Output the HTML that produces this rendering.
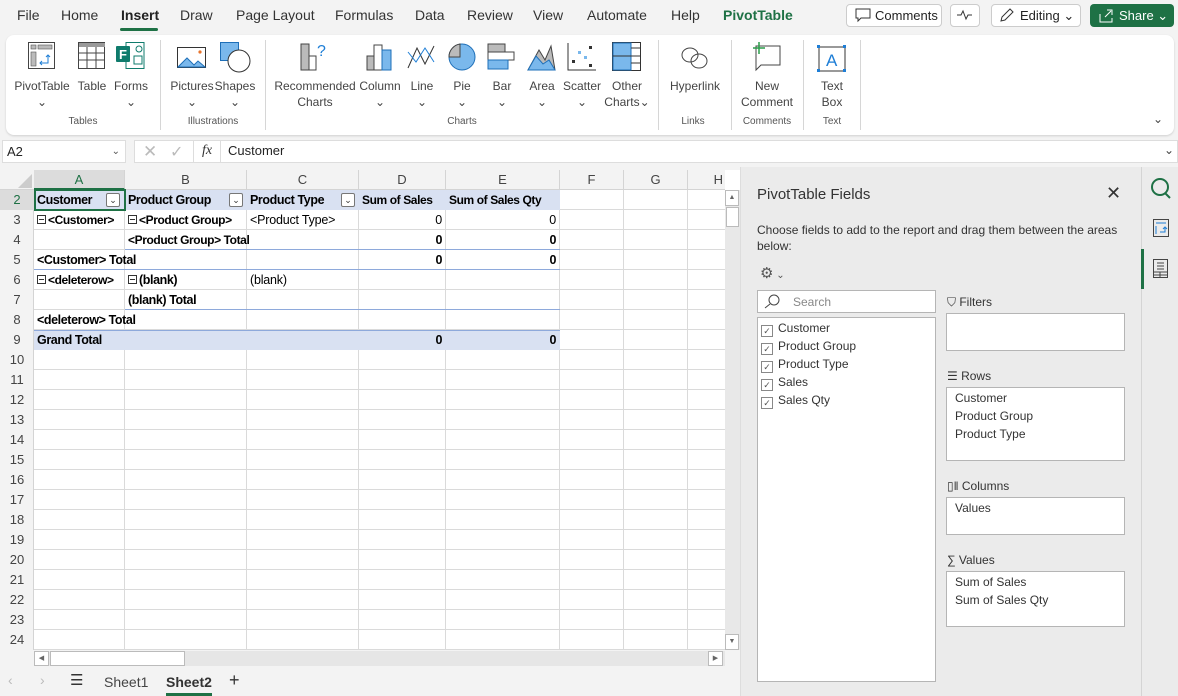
<!DOCTYPE html>
<html><head><meta charset="utf-8"><style>
*{box-sizing:border-box;margin:0;padding:0}
body{width:1178px;height:696px;overflow:hidden;background:#f3f3f3;font-family:"Liberation Sans",sans-serif;color:#242424;position:relative}
.a{position:absolute}
.tab{position:absolute;top:7px;font-size:14px;color:#333}
.rl{position:absolute;font-size:12px;color:#444;text-align:center;line-height:16px;transform:translateX(-50%);white-space:nowrap}
.gl{position:absolute;top:116px;font-size:10px;color:#555;transform:translateX(-50%)}
.sep{position:absolute;top:40px;width:1px;height:90px;background:#d6d6d6}
.ic{position:absolute;top:42px}
.ch{position:absolute;top:170px;height:20px;font-size:13px;color:#444;text-align:center;line-height:20px;border-right:1px solid #d4d4d4}
.rh{position:absolute;left:0;width:34px;height:20px;font-size:13px;color:#444;text-align:center;line-height:20px}
.c{position:absolute;height:20px;line-height:20px;font-size:12.5px;color:#000;white-space:nowrap;padding-left:3px;letter-spacing:-0.2px}
.b{font-weight:bold;letter-spacing:-0.4px}
.r{text-align:right;padding-right:4px}
.m{display:inline-block;width:9px;height:9px;border:1px solid #333;position:relative;margin-right:2px;vertical-align:0}
.m:after{content:"";position:absolute;left:1px;right:1px;top:3px;height:1px;background:#333}
.dd{position:absolute;width:14px;height:14px;border:1px solid #777;background:#fff;border-radius:2px;font-size:9px;line-height:12px;text-align:center;color:#333}
.pt{font-size:12px;color:#333}
.box{position:absolute;background:#fff;border:1px solid #b5b5b5}
.cb{display:inline-block;width:12px;height:12px;border:1px solid #888;vertical-align:-2px;margin-right:5px;font-size:9px;line-height:10px;text-align:center;color:#555}
</style></head><body>
<div class="tab" style="left:17px">File</div>
<div class="tab" style="left:61px">Home</div>
<div class="tab" style="left:121px;font-weight:bold;color:#222">Insert</div>
<div class="a" style="left:120px;top:28px;width:38px;height:3px;background:#1e7145;border-radius:2px"></div>
<div class="tab" style="left:180px">Draw</div>
<div class="tab" style="left:236px">Page Layout</div>
<div class="tab" style="left:335px">Formulas</div>
<div class="tab" style="left:415px">Data</div>
<div class="tab" style="left:467px">Review</div>
<div class="tab" style="left:533px">View</div>
<div class="tab" style="left:587px">Automate</div>
<div class="tab" style="left:671px">Help</div>
<div class="tab" style="left:723px;color:#1e7145;font-weight:bold">PivotTable</div>
<div class="a" style="left:846px;top:4px;width:96px;height:23px;border:1px solid #ccc;border-radius:4px;background:#fff;font-size:13px;line-height:21px;padding-left:28px">Comments</div>
<svg class="a" style="left:855px;top:8px" width="16" height="15"><path d="M1 1h14v9H6l-3 3v-3H1z" fill="none" stroke="#333"/></svg>
<div class="a" style="left:950px;top:4px;width:30px;height:23px;border:1px solid #ccc;border-radius:4px;background:#fff"></div>
<svg class="a" style="left:956px;top:9px" width="18" height="12"><path d="M1 6h4l2-4 3 8 2-4h4" fill="none" stroke="#333"/></svg>
<div class="a" style="left:991px;top:4px;width:90px;height:23px;border:1px solid #ccc;border-radius:4px;background:#fff;font-size:13px;line-height:21px;padding-left:28px">Editing ⌄</div>
<svg class="a" style="left:999px;top:7px" width="16" height="16"><path d="M2 14l1-4 8-8 3 3-8 8z" fill="none" stroke="#333"/></svg>
<div class="a" style="left:1090px;top:4px;width:84px;height:23px;border-radius:4px;background:#1e7145;color:#fff;font-size:13px;line-height:23px;padding-left:29px">Share ⌄</div>
<svg class="a" style="left:1098px;top:8px" width="16" height="15"><path d="M2 6v8h12v-4M7 9l6-6M9 2h5v5" fill="none" stroke="#fff"/></svg>
<div class="a" style="left:6px;top:35px;width:1168px;height:100px;background:#fff;border-radius:8px;box-shadow:0 1px 2px rgba(0,0,0,.15)"></div>
<svg class="ic" style="left:28px" width="28" height="28"><rect x=".5" y=".5" width="26" height="26" fill="#fff" stroke="#444"/><rect x="3" y="3" width="5" height="4" fill="#bbb" stroke="#555" stroke-width=".6"/><rect x="10" y="3" width="14" height="4" fill="#bbb" stroke="#555" stroke-width=".6"/><rect x="3" y="10" width="5" height="14" fill="#bbb" stroke="#555" stroke-width=".6"/><path d="M12 21h8v-8M18 15l2-2 2 2M14 19l-2 2 2 2" fill="none" stroke="#1e7ed6"/></svg>
<svg class="ic" style="left:78px" width="28" height="28"><rect x=".5" y=".5" width="26" height="26" fill="#fff" stroke="#444"/><rect x="1" y="1" width="26" height="4" fill="#999"/><path d="M1 11h26M1 18h26M9 5v22M18 5v22" stroke="#444"/></svg>
<svg class="ic" style="left:116px" width="30" height="28"><rect x="10" y=".5" width="18" height="26" fill="#fff" stroke="#0f7b6c"/><circle cx="23" cy="7" r="3" fill="none" stroke="#0f7b6c"/><rect x="18" y="14" width="8" height="8" fill="none" stroke="#0f7b6c"/><rect x="0" y="4" width="14" height="16" rx="1" fill="#0f7b6c"/><text x="3" y="17" fill="#fff" font-size="13" font-weight="bold" font-family="Liberation Sans">F</text></svg>
<div class="sep" style="left:160px"></div>
<svg class="ic" style="left:177px;top:47px" width="30" height="22"><rect x=".5" y=".5" width="28" height="20" fill="#fff" stroke="#333"/><path d="M1 20l9-9 7 7 4-4 7 6v0H1z" fill="#7ab8ec" stroke="#1e6fb8"/><circle cx="23" cy="5" r="1.6" fill="#e8742c"/></svg>
<svg class="ic" style="left:220px" width="32" height="32"><rect x=".5" y=".5" width="18" height="18" fill="#7ab8ec" stroke="#1e6fb8"/><circle cx="19" cy="19" r="11" fill="#fff" stroke="#333"/></svg>
<div class="sep" style="left:265px"></div>
<svg class="ic" style="left:300px" width="30" height="30"><rect x="1" y="2" width="8" height="26" fill="#bbb" stroke="#444"/><rect x="9" y="14" width="7" height="14" fill="#fff" stroke="#444"/><text x="17" y="14" font-size="16" fill="#1e7ed6" font-family="Liberation Sans">?</text></svg>
<svg class="ic" style="left:366px" width="28" height="30"><rect x="1" y="14" width="8" height="14" fill="#bbb" stroke="#444"/><rect x="8" y="3" width="8" height="25" fill="#fff" stroke="#444"/><rect x="16" y="8" width="9" height="20" fill="#7ab8ec" stroke="#1e6fb8"/></svg>
<svg class="ic" style="left:407px" width="30" height="30"><path d="M1 26L10 6l8 16 9-18" fill="none" stroke="#333"/><path d="M1 10l8 10 9-14 9 14" fill="none" stroke="#1e7ed6"/></svg>
<svg class="ic" style="left:447px" width="30" height="30"><circle cx="15" cy="15" r="13" fill="#7ab8ec" stroke="#1e6fb8"/><path d="M13 2a13 13 0 0 0-11 13h11z" fill="#bbb" stroke="#444"/></svg>
<svg class="ic" style="left:487px" width="30" height="30"><rect x="1" y="2" width="17" height="8" fill="#bbb" stroke="#444"/><rect x="1" y="10" width="26" height="8" fill="#fff" stroke="#444"/><rect x="1" y="18" width="20" height="9" fill="#7ab8ec" stroke="#1e6fb8"/></svg>
<svg class="ic" style="left:527px" width="30" height="30"><path d="M1 28L12 8l6 10 6-14 4 24z" fill="#bbb" stroke="#444"/><path d="M1 28l8-14 7 8 6-4 6 10z" fill="#7ab8ec" stroke="#1e6fb8"/></svg>
<svg class="ic" style="left:567px" width="30" height="30"><path d="M1 1v27h28" fill="none" stroke="#333"/><rect x="5" y="18" width="3" height="3" fill="#333"/><rect x="11" y="9" width="3" height="3" fill="#7ab8ec"/><rect x="17" y="14" width="3" height="3" fill="#7ab8ec"/><rect x="22" y="4" width="3" height="3" fill="#333"/><rect x="22" y="22" width="3" height="3" fill="#333"/></svg>
<svg class="ic" style="left:612px" width="30" height="30"><rect x=".5" y=".5" width="28" height="28" fill="#fff" stroke="#333"/><rect x="1" y="1" width="18" height="27" fill="#7ab8ec" stroke="#1e6fb8"/><path d="M1 14h18M19 6h10M19 14h10M19 21h10" stroke="#333"/></svg>
<div class="sep" style="left:658px"></div>
<svg class="ic" style="left:680px;top:46px" width="30" height="24"><ellipse cx="10" cy="9" rx="8" ry="7" fill="none" stroke="#444"/><ellipse cx="19" cy="15" rx="8" ry="7" fill="none" stroke="#444"/></svg>
<div class="sep" style="left:731px"></div>
<svg class="ic" style="left:751px" width="30" height="30"><path d="M5 4h24v19H10l-5 5z" fill="#fff" stroke="#444"/><path d="M8 0v12M2 6h12" stroke="#2a9d4a" stroke-width="1.5"/></svg>
<div class="sep" style="left:803px"></div>
<svg class="ic" style="left:817px;top:45px" width="30" height="28"><rect x="2" y="2" width="26" height="24" fill="#fff" stroke="#333"/><rect x="0" y="0" width="3" height="3" fill="#1e7ed6"/><rect x="26" y="0" width="3" height="3" fill="#1e7ed6"/><rect x="0" y="24" width="3" height="3" fill="#1e7ed6"/><rect x="26" y="24" width="3" height="3" fill="#1e7ed6"/><text x="9" y="21" font-size="17" fill="#1e7ed6" font-family="Liberation Sans">A</text></svg>
<div class="sep" style="left:860px"></div>
<div class="rl" style="left:42px;top:78px">PivotTable<br>⌄</div>
<div class="rl" style="left:92px;top:78px">Table</div>
<div class="rl" style="left:131px;top:78px">Forms<br>⌄</div>
<div class="rl" style="left:192px;top:78px">Pictures<br>⌄</div>
<div class="rl" style="left:235px;top:78px">Shapes<br>⌄</div>
<div class="rl" style="left:315px;top:78px">Recommended<br>Charts</div>
<div class="rl" style="left:380px;top:78px">Column<br>⌄</div>
<div class="rl" style="left:422px;top:78px">Line<br>⌄</div>
<div class="rl" style="left:462px;top:78px">Pie<br>⌄</div>
<div class="rl" style="left:502px;top:78px">Bar<br>⌄</div>
<div class="rl" style="left:542px;top:78px">Area<br>⌄</div>
<div class="rl" style="left:582px;top:78px">Scatter<br>⌄</div>
<div class="rl" style="left:627px;top:78px">Other<br>Charts⌄</div>
<div class="rl" style="left:695px;top:78px">Hyperlink</div>
<div class="rl" style="left:767px;top:78px">New<br>Comment</div>
<div class="rl" style="left:832px;top:78px">Text<br>Box</div>
<div class="gl" style="left:83px">Tables</div>
<div class="gl" style="left:213px">Illustrations</div>
<div class="gl" style="left:462px">Charts</div>
<div class="gl" style="left:693px">Links</div>
<div class="gl" style="left:767px">Comments</div>
<div class="gl" style="left:832px">Text</div>
<div class="a" style="left:1153px;top:112px;font-size:12px;color:#444">⌄</div>
<div class="a" style="left:2px;top:140px;width:124px;height:23px;background:#fff;border:1px solid #ddd;font-size:13px;line-height:21px;padding-left:4px">A2<span style="position:absolute;right:5px;font-size:10px;color:#555">⌄</span></div>
<div class="a" style="left:134px;top:140px;width:1044px;height:23px;background:#fff;border:1px solid #ddd"></div>
<div class="a" style="left:143px;top:142px;font-size:17px;color:#bbb">✕</div>
<div class="a" style="left:170px;top:142px;font-size:16px;color:#bbb">✓</div>
<div class="a" style="left:202px;top:143px;font-size:14px;font-style:italic;font-family:'Liberation Serif',serif;color:#333">fx</div>
<div class="a" style="left:193px;top:140px;width:1px;height:23px;background:#ddd"></div>
<div class="a" style="left:220px;top:140px;width:1px;height:23px;background:#ddd"></div>
<div class="a" style="left:228px;top:143px;font-size:13px">Customer</div>
<div class="a" style="left:1164px;top:143px;font-size:12px;color:#444">⌄</div>
<div class="a" style="left:0;top:170px;width:740px;height:480px;background:#fff"></div>
<div class="a" style="left:0;top:170px;width:725px;height:20px;background:#f3f3f3;border-bottom:1px solid #d4d4d4"></div>
<div class="a" style="left:0;top:190px;width:34px;height:460px;background:#f3f3f3;border-right:1px solid #d4d4d4"></div>
<svg class="a" style="left:18px;top:174px" width="14" height="14"><path d="M14 0v14H0z" fill="#ccc"/></svg>
<div class="a" style="left:34px;top:190px;width:691px;height:460px;background:repeating-linear-gradient(to bottom,transparent 0 19px,#dadada 19px 20px)"></div>
<div class="a" style="left:124px;top:190px;width:1px;height:460px;background:#dadada"></div>
<div class="a" style="left:246px;top:190px;width:1px;height:460px;background:#dadada"></div>
<div class="a" style="left:358px;top:190px;width:1px;height:460px;background:#dadada"></div>
<div class="a" style="left:445px;top:190px;width:1px;height:460px;background:#dadada"></div>
<div class="a" style="left:559px;top:190px;width:1px;height:460px;background:#dadada"></div>
<div class="a" style="left:623px;top:190px;width:1px;height:460px;background:#dadada"></div>
<div class="a" style="left:687px;top:190px;width:1px;height:460px;background:#dadada"></div>
<div class="ch" style="left:34px;width:91px;background:#dcdcdc;color:#1e7145;border-bottom:2px solid #1e7145">A</div>
<div class="ch" style="left:125px;width:122px">B</div>
<div class="ch" style="left:247px;width:112px">C</div>
<div class="ch" style="left:359px;width:87px">D</div>
<div class="ch" style="left:446px;width:114px">E</div>
<div class="ch" style="left:560px;width:64px">F</div>
<div class="ch" style="left:624px;width:64px">G</div>
<div class="ch" style="left:688px;width:37px;border:none;text-align:right;padding-right:2px">H</div>
<div class="rh" style="top:190px;background:#dcdcdc;color:#1e7145">2</div>
<div class="rh" style="top:210px">3</div><div class="rh" style="top:230px">4</div><div class="rh" style="top:250px">5</div><div class="rh" style="top:270px">6</div><div class="rh" style="top:290px">7</div><div class="rh" style="top:310px">8</div><div class="rh" style="top:330px">9</div><div class="rh" style="top:350px">10</div><div class="rh" style="top:370px">11</div><div class="rh" style="top:390px">12</div><div class="rh" style="top:410px">13</div><div class="rh" style="top:430px">14</div><div class="rh" style="top:450px">15</div><div class="rh" style="top:470px">16</div><div class="rh" style="top:490px">17</div><div class="rh" style="top:510px">18</div><div class="rh" style="top:530px">19</div><div class="rh" style="top:550px">20</div><div class="rh" style="top:570px">21</div><div class="rh" style="top:590px">22</div><div class="rh" style="top:610px">23</div><div class="rh" style="top:630px">24</div>
<div class="a" style="left:34px;top:190px;width:526px;height:20px;background:#d9e1f2"></div>
<div class="a" style="left:34px;top:330px;width:526px;height:20px;background:#d9e1f2;border-top:1px solid #8ea9db"></div>
<div class="a" style="left:125px;top:249px;width:435px;height:1px;background:#8ea9db"></div>
<div class="a" style="left:34px;top:269px;width:526px;height:1px;background:#8ea9db"></div>
<div class="a" style="left:125px;top:309px;width:435px;height:1px;background:#8ea9db"></div>
<div class="c b" style="left:34px;top:190px">Customer</div>
<div class="dd" style="left:106px;top:193px">⌄</div>
<div class="c b" style="left:125px;top:190px">Product Group</div>
<div class="dd" style="left:229px;top:193px">⌄</div>
<div class="c b" style="left:247px;top:190px">Product Type</div>
<div class="dd" style="left:341px;top:193px">⌄</div>
<div class="c b" style="left:359px;top:190px;font-size:12px">Sum of Sales</div>
<div class="c b" style="left:446px;top:190px;font-size:12px">Sum of Sales Qty</div>
<div class="a" style="left:34px;top:189px;width:92px;height:22px;border:2px solid #1e7145"></div>
<div class="c b" style="left:34px;top:210px;font-size:12px"><span class="m"></span>&lt;Customer&gt;</div>
<div class="c b" style="left:125px;top:210px;font-size:12px"><span class="m"></span>&lt;Product Group&gt;</div>
<div class="c" style="left:247px;top:210px">&lt;Product Type&gt;</div>
<div class="c r" style="left:359px;width:87px;top:210px">0</div>
<div class="c r" style="left:446px;width:114px;top:210px">0</div>
<div class="c b" style="left:125px;top:230px;font-size:12px">&lt;Product Group&gt; Total</div>
<div class="c r b" style="left:359px;width:87px;top:230px">0</div>
<div class="c r b" style="left:446px;width:114px;top:230px">0</div>
<div class="c b" style="left:34px;top:250px">&lt;Customer&gt; Total</div>
<div class="c r b" style="left:359px;width:87px;top:250px">0</div>
<div class="c r b" style="left:446px;width:114px;top:250px">0</div>
<div class="c b" style="left:34px;top:270px;font-size:12px"><span class="m"></span>&lt;deleterow&gt;</div>
<div class="c b" style="left:125px;top:270px"><span class="m"></span>(blank)</div>
<div class="c" style="left:247px;top:270px">(blank)</div>
<div class="c b" style="left:125px;top:290px">(blank) Total</div>
<div class="c b" style="left:34px;top:310px">&lt;deleterow&gt; Total</div>
<div class="c b" style="left:34px;top:330px">Grand Total</div>
<div class="c r b" style="left:359px;width:87px;top:330px">0</div>
<div class="c r b" style="left:446px;width:114px;top:330px">0</div>
<div class="a" style="left:725px;top:190px;width:15px;height:460px;background:#e8e8e8"></div>
<div class="a" style="left:725px;top:190px;width:14px;height:16px;background:#fff;border:1px solid #bbb;font-size:7px;text-align:center;line-height:14px;color:#666">▲</div>
<div class="a" style="left:726px;top:207px;width:13px;height:20px;background:#fff;border:1px solid #bbb"></div>
<div class="a" style="left:725px;top:634px;width:14px;height:16px;background:#fff;border:1px solid #bbb;font-size:7px;text-align:center;line-height:14px;color:#666">▼</div>
<div class="a" style="left:34px;top:651px;width:691px;height:15px;background:#e6e6e6"></div>
<div class="a" style="left:34px;top:651px;width:15px;height:15px;background:#fff;border:1px solid #bbb;font-size:7px;text-align:center;line-height:13px;color:#666">◀</div>
<div class="a" style="left:50px;top:651px;width:135px;height:15px;background:#fff;border:1px solid #bbb"></div>
<div class="a" style="left:708px;top:651px;width:15px;height:15px;background:#fff;border:1px solid #bbb;font-size:7px;text-align:center;line-height:13px;color:#666">▶</div>
<div class="a" style="left:8px;top:672px;font-size:14px;color:#bbb">‹</div>
<div class="a" style="left:40px;top:672px;font-size:14px;color:#bbb">›</div>
<div class="a" style="left:70px;top:671px;font-size:15px;color:#333">☰</div>
<div class="a" style="left:104px;top:674px;font-size:14px;color:#444">Sheet1</div>
<div class="a" style="left:166px;top:674px;font-size:14px;color:#333;font-weight:bold">Sheet2</div>
<div class="a" style="left:166px;top:693px;width:46px;height:3px;background:#1e7145"></div>
<div class="a" style="left:229px;top:670px;font-size:18px;color:#333">+</div>
<div class="a" style="left:740px;top:167px;width:401px;height:529px;background:#ebebeb;border-left:1px solid #ddd"></div>
<div class="a" style="left:1141px;top:167px;width:37px;height:529px;background:#ebebeb;border-left:1px solid #d4d4d4"></div>
<div class="a" style="left:1141px;top:249px;width:3px;height:40px;background:#1e7145"></div>
<svg class="a" style="left:1150px;top:176px" width="22" height="24"><circle cx="10" cy="11" r="8" fill="none" stroke="#1e7145" stroke-width="2"/><path d="M15 17l5 5" stroke="#1e7145" stroke-width="2"/></svg>
<svg class="a" style="left:1153px;top:219px" width="16" height="18"><rect x=".5" y=".5" width="15" height="17" fill="none" stroke="#444"/><path d="M3 4h10M3 7v8M7 13h5v-5M10 10l2-2 2 2" fill="none" stroke="#1e7ed6"/></svg>
<svg class="a" style="left:1153px;top:259px" width="16" height="20"><rect x=".5" y=".5" width="14" height="18" fill="none" stroke="#444"/><path d="M4 4h7M4 7h7M4 10h7M1 13h14M1 16h14M7 13v6" stroke="#444"/></svg>
<div class="a" style="left:757px;top:186px;font-size:15px;color:#333">PivotTable Fields</div>
<div class="a" style="left:1106px;top:183px;font-size:18px;color:#333">✕</div>
<div class="a pt" style="left:757px;top:222px;width:370px;line-height:16px">Choose fields to add to the report and drag them between the areas below:</div>
<div class="a" style="left:760px;top:264px;font-size:15px;color:#555">⚙<span style="font-size:10px"> ⌄</span></div>
<div class="box" style="left:757px;top:290px;width:179px;height:23px"></div>
<svg class="a" style="left:764px;top:294px" width="16" height="15"><circle cx="10" cy="6" r="5" fill="none" stroke="#444"/><path d="M6 10l-5 4" stroke="#444"/></svg>
<div class="a pt" style="left:793px;top:295px;color:#888">Search</div>
<div class="box" style="left:757px;top:317px;width:179px;height:365px;padding:1px 0 0 3px">
<div class="pt" style="line-height:18px"><span class="cb">✓</span>Customer</div>
<div class="pt" style="line-height:18px"><span class="cb">✓</span>Product Group</div>
<div class="pt" style="line-height:18px"><span class="cb">✓</span>Product Type</div>
<div class="pt" style="line-height:18px"><span class="cb">✓</span>Sales</div>
<div class="pt" style="line-height:18px"><span class="cb">✓</span>Sales Qty</div>
</div>
<div class="a pt" style="left:947px;top:295px">⛉ Filters</div>
<div class="box" style="left:946px;top:313px;width:179px;height:38px"></div>
<div class="a pt" style="left:947px;top:369px">☰ Rows</div>
<div class="box pt" style="left:946px;top:387px;width:179px;height:74px;padding:1px 8px;line-height:18px">Customer<br>Product Group<br>Product Type</div>
<div class="a pt" style="left:947px;top:479px">▯‖ Columns</div>
<div class="box pt" style="left:946px;top:497px;width:179px;height:38px;padding:1px 8px;line-height:18px">Values</div>
<div class="a pt" style="left:947px;top:553px">∑ Values</div>
<div class="box pt" style="left:946px;top:571px;width:179px;height:56px;padding:1px 8px;line-height:18px">Sum of Sales<br>Sum of Sales Qty</div>
</body></html>
